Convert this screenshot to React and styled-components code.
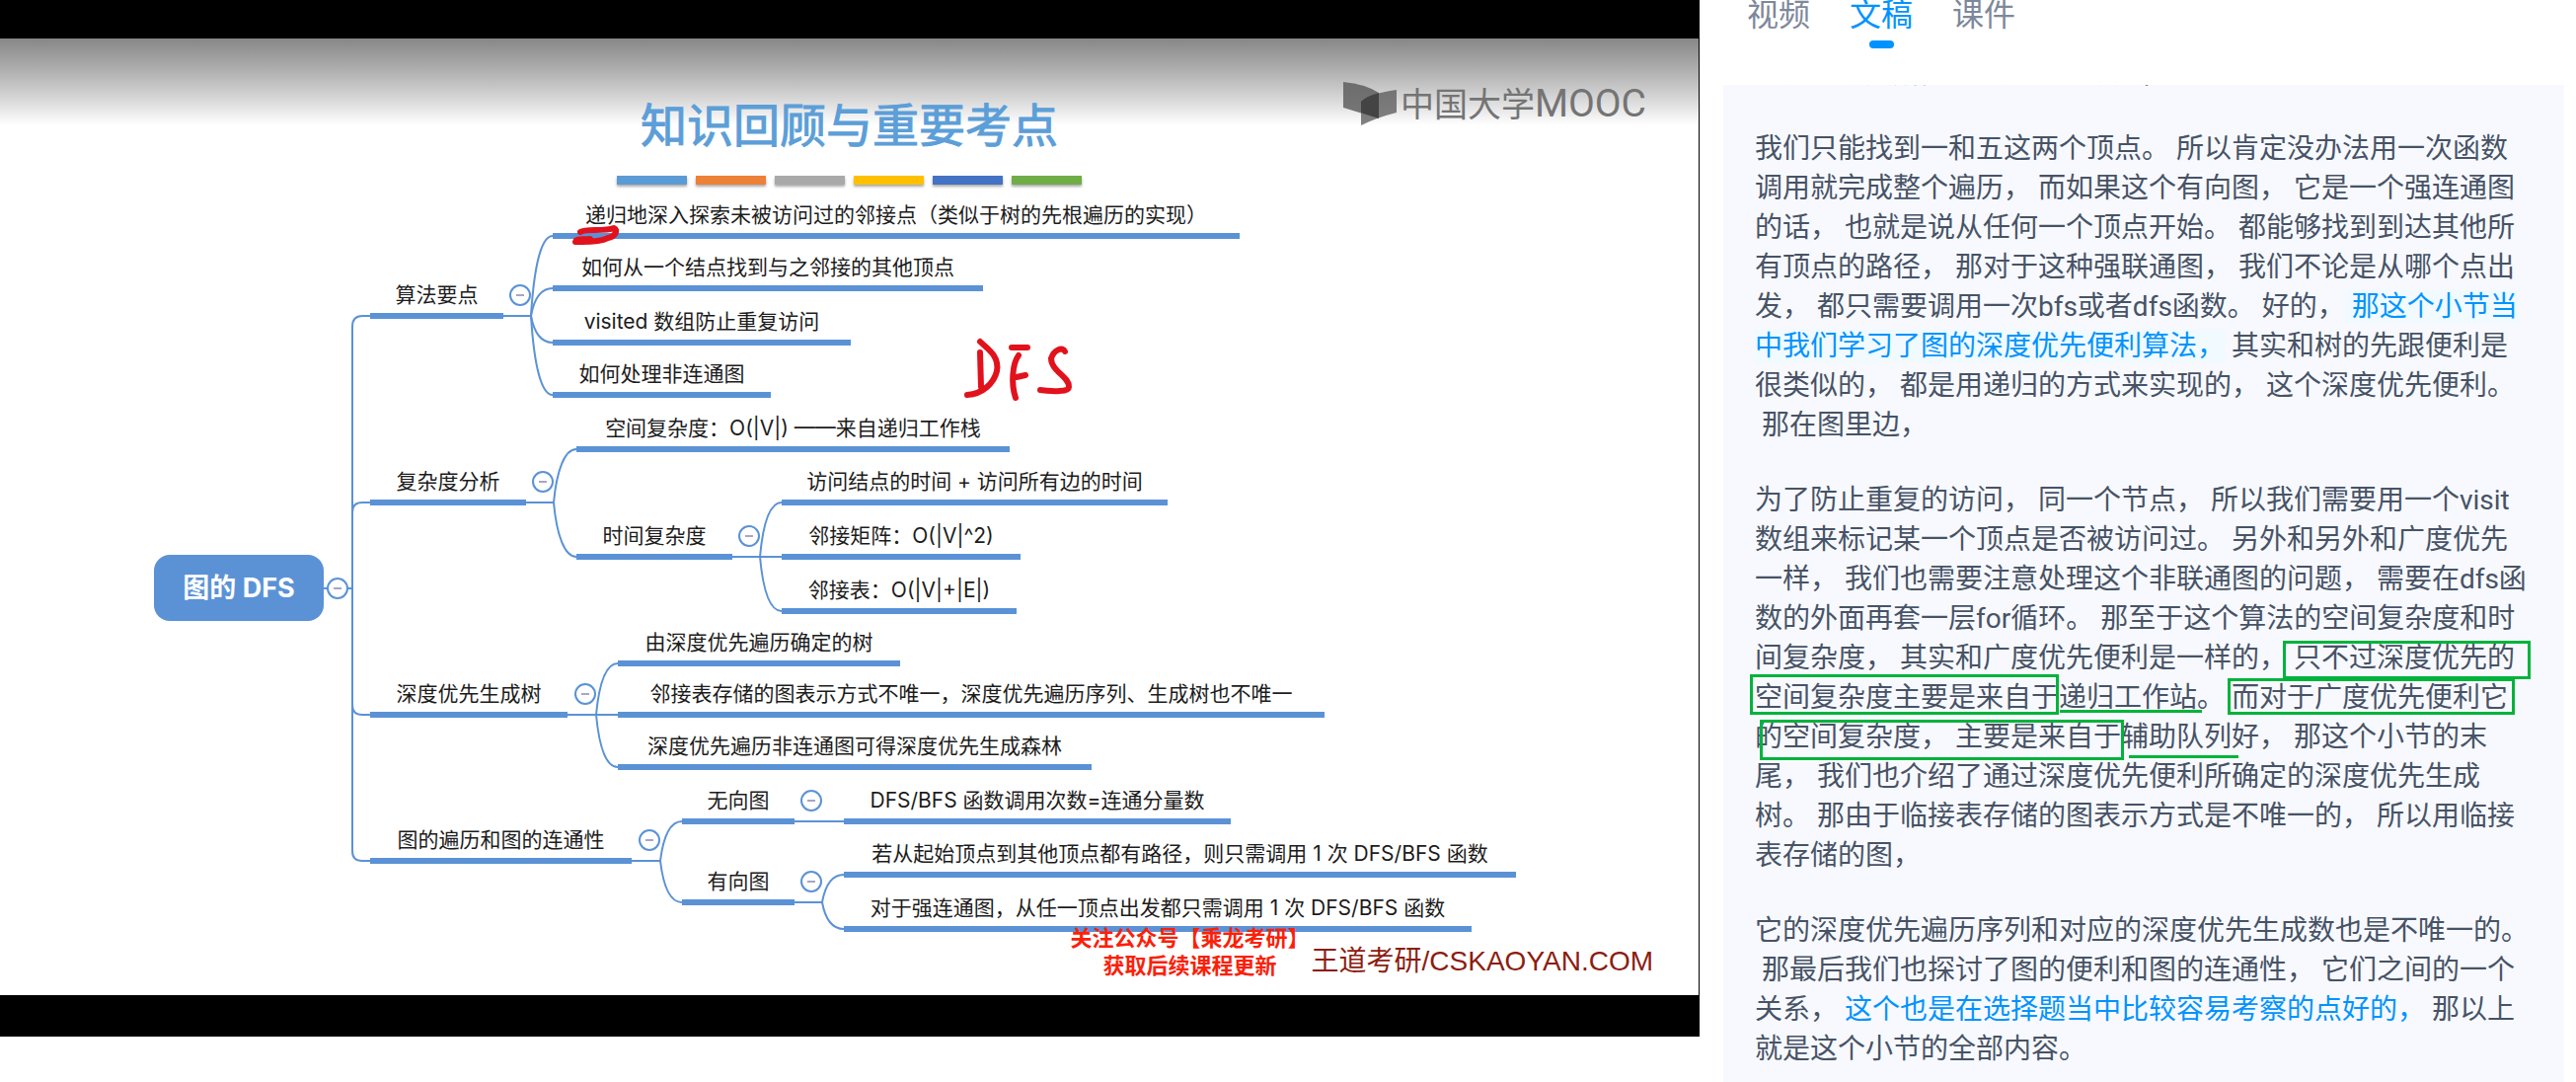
import React, { useState } from "react";
import styled, { createGlobalStyle } from "styled-components";

const BLUE = "#5b92d6";

const GlobalStyle = createGlobalStyle`
  * { box-sizing: border-box; }
  body {
    margin: 0;
    background: #fff;
    font-family: Roboto, "Noto Sans CJK SC", sans-serif;
  }
`;

const Page = styled.div`
  display: grid;
  grid-template-columns: minmax(0, 1fr) 888px;
  height: 100vh;
  min-height: 640px;
  overflow: hidden;
`;

/* ---------- video ---------- */

const Stage = styled.main`
  position: relative;
  align-self: start;
  padding: 39px 1px 42px 0;
  background: #000;
  overflow: hidden;
  font-family: Inter, "Noto Sans CJK SC", sans-serif;
`;

const Slide = styled.section`
  display: flex;
  flex-direction: column;
  align-items: center;
  height: 969px;
  padding-top: 52px;
  background: linear-gradient(#878787 0, #b4b4b4 36px, #dedede 66px, #fff 88px) #fff;
`;

const Title = styled.h1`
  margin: 0;
  font-size: 47px;
  line-height: 72px;
  font-weight: 400;
  color: #5c9ed8;
  -webkit-text-stroke: 1px #5c9ed8;
`;

const Stripes = styled.div`
  display: flex;
  gap: 9px;
  margin-top: 15px;
`;

const Stripe = styled.span`
  width: 71px;
  height: 9px;
  background: ${(p) => p.$color};
  box-shadow: 0 2px 3px rgba(0, 0, 0, 0.35);
`;

const Footer = styled.footer`
  position: relative;
  z-index: 1;
  display: flex;
  align-self: flex-end;
  align-items: center;
  gap: 2px;
  margin-top: auto;
  padding: 0 46px 14px 0;
`;

const Notice = styled.p`
  margin: 0;
  font-size: 22px;
  line-height: 28px;
  font-weight: 700;
  text-align: center;
  color: #fb2008;
`;

const Brand = styled.span`
  padding-top: 20px;
  font-family: "Liberation Sans", "Noto Sans CJK SC", sans-serif;
  font-size: 28px;
  line-height: 40px;
  color: #8c1d12;
`;

const Watermark = styled.div`
  position: absolute;
  top: 82px;
  right: 54px;
  display: flex;
  align-items: center;
  gap: 4px;
  color: #747474;
`;

const WatermarkText = styled.span`
  font-family: Roboto, "Noto Sans CJK SC", sans-serif;
  font-size: 34px;
  line-height: 44px;
  font-weight: 400;
`;

const WatermarkLatin = styled.span`
  font-size: 39px;
`;

const Overlay = styled.svg`
  position: absolute;
  top: 0;
  left: 0;
  pointer-events: none;
`;

const Topic = styled.div`
  position: absolute;
  left: ${(p) => p.$x}px;
  top: ${(p) => p.$y - 34}px;
  width: ${(p) => p.$w}px;
  border-bottom: 6px solid ${BLUE};
  padding-bottom: 2px;
  font-size: 21px;
  line-height: 32px;
  text-align: center;
  white-space: nowrap;
  color: #1c1c1c;
`;

const Root = styled.div`
  position: absolute;
  left: 156px;
  top: 562px;
  width: 172px;
  height: 67px;
  border-radius: 16px;
  background: ${BLUE};
  color: #fff;
  font-size: 27px;
  line-height: 67px;
  font-weight: 700;
  text-align: center;
`;

const Toggle = styled.button`
  position: absolute;
  left: ${(p) => p.$x - 11}px;
  top: ${(p) => p.$y - 11}px;
  display: grid;
  place-items: center;
  width: 22px;
  height: 22px;
  padding: 0;
  border: 2px solid ${BLUE};
  border-radius: 50%;
  background: #fff;
`;

const Minus = styled.span`
  width: 8px;
  height: 2px;
  background: #a9a5c4;
`;

const topics = [
  { x: 375, y: 317, w: 135, text: "算法要点", hub: 538, kids: [[560, 236], [560, 289], [560, 344], [560, 397]] },
  { x: 560, y: 236, w: 696, text: "递归地深入探索未被访问过的邻接点（类似于树的先根遍历的实现）" },
  { x: 560, y: 289, w: 436, text: "如何从一个结点找到与之邻接的其他顶点" },
  { x: 560, y: 344, w: 302, text: "visited 数组防止重复访问" },
  { x: 560, y: 397, w: 221, text: "如何处理非连通图" },
  { x: 375, y: 506, w: 158, text: "复杂度分析", hub: 561, kids: [[584, 452], [584, 561]] },
  { x: 584, y: 452, w: 439, text: "空间复杂度：O(|V|) ——来自递归工作栈" },
  { x: 584, y: 561, w: 158, text: "时间复杂度", hub: 770, kids: [[792, 506], [792, 561], [792, 616]] },
  { x: 792, y: 506, w: 391, text: "访问结点的时间 + 访问所有边的时间" },
  { x: 792, y: 561, w: 242, text: "邻接矩阵：O(|V|^2)" },
  { x: 792, y: 616, w: 238, text: "邻接表：O(|V|+|E|)" },
  { x: 375, y: 721, w: 200, text: "深度优先生成树", hub: 604, kids: [[626, 669], [626, 721], [626, 774]] },
  { x: 626, y: 669, w: 286, text: "由深度优先遍历确定的树" },
  { x: 626, y: 721, w: 716, text: "邻接表存储的图表示方式不唯一，深度优先遍历序列、生成树也不唯一" },
  { x: 626, y: 774, w: 480, text: "深度优先遍历非连通图可得深度优先生成森林" },
  { x: 375, y: 869, w: 265, text: "图的遍历和图的连通性", hub: 669, kids: [[691, 829], [691, 911]] },
  { x: 691, y: 829, w: 114, text: "无向图", hub: 833, kids: [[855, 829]] },
  { x: 855, y: 829, w: 392, text: "DFS/BFS 函数调用次数=连通分量数" },
  { x: 691, y: 911, w: 114, text: "有向图", hub: 833, kids: [[855, 883], [855, 938]] },
  { x: 855, y: 883, w: 681, text: "若从起始顶点到其他顶点都有路径，则只需调用 1 次 DFS/BFS 函数" },
  { x: 855, y: 938, w: 636, text: "对于强连通图，从任一顶点出发都只需调用 1 次 DFS/BFS 函数" },
];

function linkPath(hub, y0, x1, y1) {
  if (y0 === y1) return `M${hub} ${y0}H${x1}`;
  const dy = y1 - y0;
  return `M${hub} ${y0}C${hub + 3} ${y0 + dy * 0.6} ${x1 - 12} ${y1} ${x1} ${y1}`;
}

function Connectors() {
  return (
    <Overlay width="1722" height="1050" fill="none" stroke={BLUE} strokeWidth="2" aria-hidden="true">
      <path d="M328 596H357" />
      <path d="M375 320H367Q357 320 357 331V862Q357 872 367 872H375" />
      <path d="M375 509H367Q357 509 357 519" />
      <path d="M375 724H367Q357 724 357 714" />
      {topics.filter((t) => t.hub).map((t) => (
        <g key={t.text}>
          <path d={`M${t.x + t.w} ${t.y + 3}H${t.hub}`} />
          {t.kids.map(([x, y]) => (
            <path key={y} d={linkPath(t.hub, t.y + 3, x, y + 3)} />
          ))}
        </g>
      ))}
    </Overlay>
  );
}

function PenMarks() {
  return (
    <Overlay width="1722" height="1050" fill="none" stroke="#e2121c" strokeWidth="6" strokeLinecap="round" strokeLinejoin="round" aria-hidden="true">
      <path d="M993 346C999 352 1013 360 1010 376C1007 388 996 399 980 400M993 357L994 392" />
      <path d="M1025 352H1041M1032 360C1026 368 1024 388 1029 403M1030 382L1039 380" />
      <path d="M1079 356C1077 351 1068 354 1065 363C1065 376 1084 382 1083 392C1083 398 1065 396 1054 395" />
      <path d="M588 235C594 231 612 235 622 231C627 233 623 240 616 241C606 246 592 245 583 245C584 241 590 243 598 242" />
    </Overlay>
  );
}

function BookLogo() {
  return (
    <svg width="54" height="46" viewBox="0 0 54 46" aria-hidden="true">
      <path d="M0 1Q22 3 36 12V38L0 27Z" fill="#555" fillOpacity="0.78" />
      <path d="M18 21Q26 13 54 9V32Q34 37 18 45Z" fill="#555" fillOpacity="0.74" />
      <path d="M18 21Q24 15 36 12V38L18 32Z" fill="#333" fillOpacity="0.6" />
    </svg>
  );
}

function Video() {
  return (
    <Stage>
      <Slide>
        <Title>知识回顾与重要考点</Title>
        <Stripes>
          {["#5b9bd5", "#ed8137", "#a9a9a9", "#ffc000", "#4472c4", "#70ad47"].map((c) => (
            <Stripe key={c} $color={c} />
          ))}
        </Stripes>
        <Footer>
          <Notice>
            关注公众号【乘龙考研】
            <br />
            获取后续课程更新
          </Notice>
          <Brand>王道考研/CSKAOYAN.COM</Brand>
        </Footer>
      </Slide>
      <Watermark>
        <BookLogo />
        <WatermarkText>
          中国大学<WatermarkLatin>MOOC</WatermarkLatin>
        </WatermarkText>
      </Watermark>
      <Connectors />
      <Root>图的 DFS</Root>
      <Toggle $x={342} $y={596} aria-label="收起 图的 DFS">
        <Minus />
      </Toggle>
      {topics.map((t) => (
        <Topic key={t.text} $x={t.x} $y={t.y} $w={t.w}>
          {t.text}
        </Topic>
      ))}
      {topics.filter((t) => t.hub).map((t) => (
        <Toggle key={t.text} $x={t.hub - 11} $y={t.y - 18} aria-label={`收起 ${t.text}`}>
          <Minus />
        </Toggle>
      ))}
      <PenMarks />
    </Stage>
  );
}

/* ---------- transcript ---------- */

const Side = styled.aside`
  display: flex;
  flex-direction: column;
  min-height: 0;
  padding: 0 12px 0 24px;
`;

const Tabs = styled.div`
  display: flex;
  flex: none;
  gap: 40px;
  height: 86px;
  padding-left: 24px;
`;

const Tab = styled.button`
  display: flex;
  flex-direction: column;
  align-items: center;
  gap: 11px;
  height: 49px;
  padding: 0;
  border: 0;
  background: none;
  font-family: inherit;
  font-size: 32px;
  line-height: 30px;
  color: ${(p) => (p.$active ? "#0093ff" : "#7d889b")};

  &::after {
    content: "";
    width: 25px;
    height: 8px;
    border-radius: 4px;
    background: ${(p) => (p.$active ? "#0093ff" : "transparent")};
  }
`;

const Panel = styled.article`
  position: relative;
  flex: 1;
  min-height: 0;
  overflow: hidden;
  padding: 0 32px;
  background: #f7f9fe;
  color: #475366;
`;

const Paragraph = styled.p`
  margin: 0 0 36px;
  font-size: 28px;
  line-height: 40px;
  white-space: pre;

  &:first-child {
    margin-top: -31px;
  }
`;

const Playing = styled.mark`
  background: ${(p) => (p.$lit ? "#f0faff" : "transparent")};
  color: #0093ff;
`;

const Frame = styled.span`
  position: absolute;
  left: ${(p) => p.$x}px;
  top: ${(p) => p.$y}px;
  width: ${(p) => p.$w}px;
  height: ${(p) => p.$h}px;
  border: 3px solid #00b33c;
`;

const Rule = styled.span`
  position: absolute;
  left: ${(p) => p.$x}px;
  top: ${(p) => p.$y}px;
  width: ${(p) => p.$w}px;
  height: 3px;
  background: #00b33c;
`;

function Transcript() {
  return (
    <Panel>
      <Paragraph>从这个顶点所能找到这两个顶点，</Paragraph>
      <Paragraph>
        {"我们只能找到一和五这两个顶点。 所以肯定没办法用一次函数\n调用就完成整个遍历， 而如果这个有向图， 它是一个强连通图\n的话， 也就是说从任何一个顶点开始。 都能够找到到达其他所\n有顶点的路径， 那对于这种强联通图， 我们不论是从哪个点出\n发， 都只需要调用一次bfs或者dfs函数。 好的，"}
        <Playing $lit>{" 那这个小节当\n中我们学习了图的深度优先便利算法，"}</Playing>
        {" 其实和树的先跟便利是\n很类似的， 都是用递归的方式来实现的， 这个深度优先便利。\n 那在图里边，"}
      </Paragraph>
      <Paragraph>
        {"为了防止重复的访问， 同一个节点， 所以我们需要用一个visit\n数组来标记某一个顶点是否被访问过。 另外和另外和广度优先\n一样， 我们也需要注意处理这个非联通图的问题， 需要在dfs函\n数的外面再套一层for循环。 那至于这个算法的空间复杂度和时\n间复杂度， 其实和广度优先便利是一样的， 只不过深度优先的\n空间复杂度主要是来自于递归工作站。 而对于广度优先便利它\n的空间复杂度， 主要是来自于辅助队列好， 那这个小节的末\n尾， 我们也介绍了通过深度优先便利所确定的深度优先生成\n树。 那由于临接表存储的图表示方式是不唯一的， 所以用临接\n表存储的图，"}
      </Paragraph>
      <Paragraph>
        {"它的深度优先遍历序列和对应的深度优先生成数也是不唯一的。\n 那最后我们也探讨了图的便利和图的连通性， 它们之间的一个\n关系，"}
        <Playing>{" 这个也是在选择题当中比较容易考察的点好的，"}</Playing>
        {" 那以上\n就是这个小节的全部内容。"}
      </Paragraph>
      <Frame $x={567} $y={563} $w={251} $h={39} />
      <Frame $x={27} $y={597} $w={313} $h={41} />
      <Frame $x={511} $y={601} $w={291} $h={37} />
      <Frame $x={37} $y={643} $w={369} $h={41} />
      <Rule $x={341} $y={633} $w={144} />
      <Rule $x={411} $y={679} $w={111} />
    </Panel>
  );
}

export default function App() {
  const [active, setActive] = useState("文稿");
  return (
    <>
      <GlobalStyle />
      <Page>
        <Video />
        <Side>
          <Tabs role="tablist">
            {["视频", "文稿", "课件"].map((name) => (
              <Tab key={name} role="tab" aria-selected={name === active} $active={name === active} onClick={() => setActive(name)}>
                {name}
              </Tab>
            ))}
          </Tabs>
          <Transcript />
        </Side>
      </Page>
    </>
  );
}
